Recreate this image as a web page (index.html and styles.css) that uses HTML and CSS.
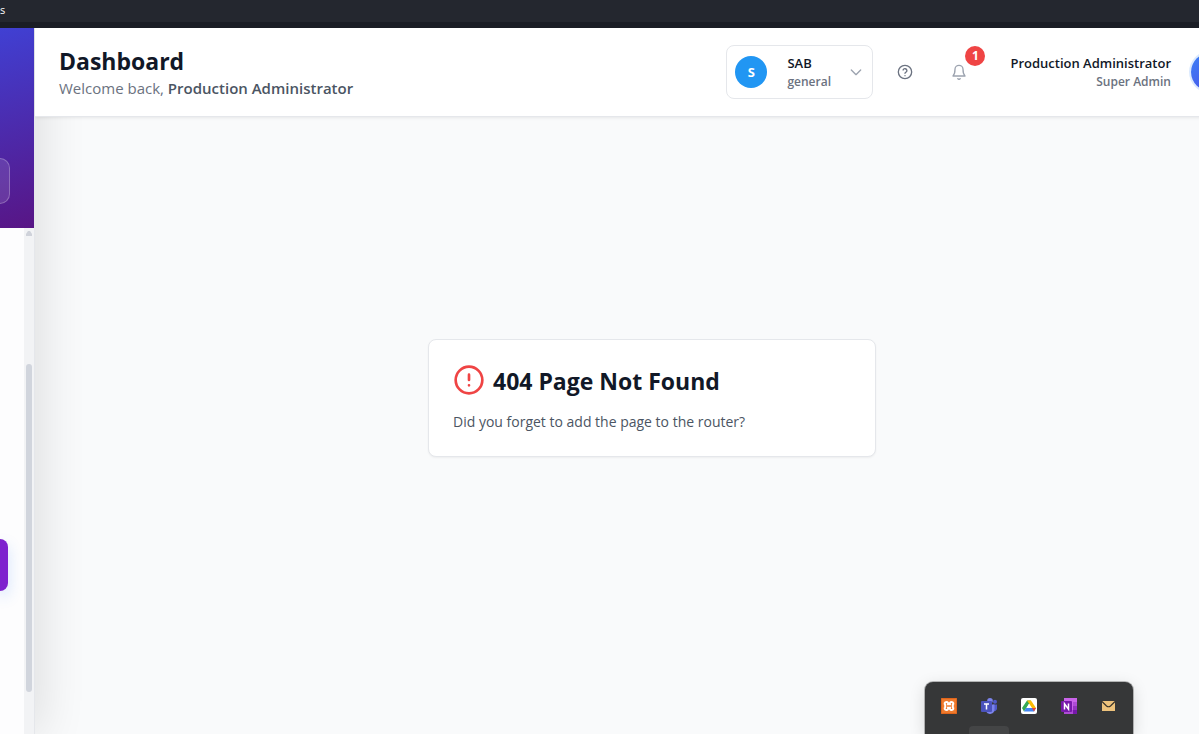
FILE: index.html
```html
<!DOCTYPE html>
<html lang="en">
<head>
<meta charset="utf-8">
<title>Dashboard</title>
<link rel="stylesheet" href="styles.css">
</head>
<body>
<div class="browser-bar"><span>s</span></div>
<div class="app">
  <aside class="sidebar">
    <div class="brand"><div class="brand-card"></div></div>
    <div class="nav-area">
      <nav class="nav"><div class="nav-active"></div></nav>
      <div class="track">
        <svg class="track-arrow" width="6" height="5" viewBox="0 0 6 5"><path d="M2 0h2l2 3v2H0V3z" fill="#cfd2da"/></svg>
        <div class="thumb"></div>
      </div>
    </div>
  </aside>
  <div class="main">
    <header class="header">
      <div class="heading">
        <h1>Dashboard</h1>
        <p>Welcome back, <strong>Production Administrator</strong></p>
      </div>
      <div class="actions">
        <button class="org" type="button">
          <span class="org-logo">S</span>
          <span class="org-text"><span class="name">SAB</span><span class="sub">general</span></span>
          <svg class="chevron" width="16" height="16" viewBox="0 0 24 24" fill="none" stroke="#9ca3af" stroke-width="2" stroke-linecap="round" stroke-linejoin="round"><path d="m5 9 7 7 7-7"/></svg>
        </button>
        <button class="icon-button" type="button" aria-label="Help">
          <svg width="16" height="16" viewBox="0 0 24 24" fill="none" stroke="#6b7280" stroke-width="2" stroke-linecap="round" stroke-linejoin="round"><circle cx="12" cy="12" r="10"/><path d="M9.1 9a3 3 0 0 1 5.8 1c0 2-2.9 2.600-2.900 4M12 17.500h.01"/></svg>
        </button>
        <button class="icon-button bell" type="button" aria-label="Notifications">
          <svg width="16" height="16" viewBox="0 0 24 24" fill="none" stroke="#9ca3af" stroke-width="2" stroke-linecap="round" stroke-linejoin="round"><path d="M6 8a6 6 0 0 1 12 0c0 7 3 10 3 10H3s3-3 3-10"/><path d="M10.300 22a1.940 1.940 0 0 0 3.400 0"/></svg>
          <span class="badge">1</span>
        </button>
        <div class="user">
          <div class="user-text"><span class="name">Production Administrator</span><span class="sub">Super Admin</span></div>
          <div class="avatar"></div>
        </div>
      </div>
    </header>
    <main class="content">
      <section class="card">
        <div class="card-title">
          <svg width="32" height="32" viewBox="0 0 24 24" fill="none" stroke="#ef4444" stroke-width="2" stroke-linecap="round"><circle cx="12" cy="12" r="10"/><path d="M12 8v4M12 16h.01"/></svg>
          <h2>404 Page Not Found</h2>
        </div>
        <p>Did you forget to add the page to the router?</p>
      </section>
    </main>
  </div>
</div>
<div class="tray">
  <svg width="16" height="16" viewBox="0 0 16 16"><rect width="16" height="16" rx="1" fill="#ee7a2d"/><rect x=".5" y=".5" width="15" height="15" rx="1" fill="none" stroke="#e0641a"/><path d="M5.500 4C3.500 4 3.200 5.800 4.200 6.600v2.800C3.200 10.200 3.500 12 5.500 12c1.500 0 1.800-1.200 1.600-2.200h1.800c-.2 1 .1 2.200 1.600 2.200 2 0 2.300-1.800 1.300-2.600V6.600C12.800 5.800 12.500 4 10.500 4 9 4 8.700 5.200 8.900 6.200H7.100C7.300 5.200 7 4 5.500 4z" fill="none" stroke="#fff" stroke-width="2"/></svg>
  <svg width="16" height="16" viewBox="0 0 16 16"><circle cx="9" cy="2.800" r="2.800" fill="#7b83eb"/><circle cx="14" cy="3.800" r="2" fill="#5059c9"/><path d="M12 6.500h4v4.500a3 3 0 0 1-4 2z" fill="#5059c9"/><path d="M5 6.500h8.500v5a4.500 4.500 0 0 1-8.500 2z" fill="#7b83eb"/><rect y="3" width="11" height="11" rx="1" fill="#4b53bc"/><path d="M3 6h5M5.500 6v5.500" stroke="#fff" stroke-width="1.500"/></svg>
  <svg width="16" height="16" viewBox="0 0 16 16"><rect width="16" height="16" rx="2" fill="#fff"/><path d="M6 2.500h4L5 10.500l-2 3-2-3.500z" fill="#34a853"/><path d="M6 2.500h4l5 7.500h-4z" fill="#fbbc04"/><path d="M5 10h10l-2 3.500H3z" fill="#4285f4"/><path d="M11 10h4l-2 3.500z" fill="#ea4335"/><path d="m8 6 2.500 4h-5z" fill="#fff"/></svg>
  <svg width="16" height="16" viewBox="0 0 16 16"><path d="M3 0h13v16H3z" fill="#ca64ea"/><path d="M12 4h4v4h-4z" fill="#ae4bd5"/><path d="M12 8h4v4h-4z" fill="#9332bf"/><path d="M3 12h13v4H3z" fill="#7719aa"/><path d="M3 12h9v4H3z" fill="#ae4bd5"/><rect y="3" width="11" height="11" rx="1" fill="#7719aa"/><path d="M3.500 11.500V5.800l4 5.400V5.500" fill="none" stroke="#fff" stroke-width="1.500"/></svg>
  <svg width="16" height="16" viewBox="0 0 16 16"><path d="M1 3h13v10H1z" fill="#edc27c"/><path d="m1 3.500 4.500 4.500q2 1.500 4 0L14 3.500" fill="none" stroke="#38322a" stroke-width="1.200"/></svg>
  <span class="tray-tab"></span>
</div>
</body>
</html>
```
FILE: styles.css
```css
* { box-sizing: border-box; }
body {
  margin: 0;
  height: 100vh;
  display: flex;
  flex-direction: column;
  overflow: hidden;
  font-family: "Open Sans", "Noto Sans", sans-serif;
  background: #f9fafb;
  color: #111827;
}
h1, h2, p { margin: 0; }
button { font: inherit; color: inherit; background: none; border: 0; padding: 0; }
svg { display: block; flex: none; }

.browser-bar {
  flex: none;
  height: 28px;
  background: #24272f;
  border-bottom: 6px solid #1a1d25;
  color: #fff;
  font-size: 11px;
  line-height: 20px;
}
.app { flex: 1; display: flex; min-height: 0; overflow: hidden; }

.sidebar {
  flex: none;
  width: 35px;
  display: flex;
  flex-direction: column;
  border-right: 1px solid #e5e7eb;
  background: #fdfdfe;
  box-shadow: 0 0 50px rgba(0, 0, 0, .16);
}
.brand {
  height: 200px;
  padding-top: 130px;
  background: linear-gradient(165deg, #4040d3, #581585);
}
.brand-card {
  width: 10px;
  height: 46px;
  border: 1px solid rgba(255, 255, 255, .25);
  border-left: 0;
  border-radius: 0 12px 12px 0;
  background: rgba(255, 255, 255, .12);
}
.nav-area { flex: 1; display: flex; }
.nav { flex: 1; padding-top: 311px; }
.nav-active {
  width: 8px;
  height: 52px;
  border-radius: 0 10px 10px 0;
  background: #7e22ce;
  box-shadow: 0 6px 14px rgba(59, 130, 246, .25);
}
.track {
  width: 10px;
  background: #f2f3f5;
  display: flex;
  flex-direction: column;
  align-items: center;
  padding-top: 3px;
}
.thumb {
  width: 6px;
  height: 328px;
  margin-top: 128px;
  border-radius: 3px;
  background: #d1d5dd;
}

/* The main column runs past the right edge of the window. */
.main {
  flex: none;
  width: calc(100% + 35px);
  display: flex;
  flex-direction: column;
}
.header {
  position: relative;
  display: flex;
  justify-content: space-between;
  align-items: center;
  height: 89px;
  padding: 0 40px 0 24px;
  background: #fff;
  border-bottom: 1px solid #e5e7eb;
  box-shadow: 0 1px 3px rgba(0, 0, 0, .08);
}
.heading h1 { font-size: 23px; line-height: 32px; font-weight: 700; }
.heading p { font-size: 15px; line-height: 22px; color: #6b7280; }
.heading strong { font-weight: 600; color: #4b5563; }
.actions { display: flex; align-items: center; }
.org {
  display: flex;
  align-items: center;
  width: 147px;
  height: 54px;
  padding: 0 8px;
  border: 1px solid #e5e7eb;
  border-radius: 8px;
  text-align: left;
}
.org-logo {
  width: 32px;
  height: 32px;
  border-radius: 50%;
  background: #2196f3;
  color: #fff;
  font-size: 13px;
  line-height: 32px;
  font-weight: 700;
  text-align: center;
}
.org-text { margin-left: 20px; flex: 1; }
.org-text, .user-text { padding-top: 2px; }
.name, .sub { display: block; font-weight: 600; }
.name { font-size: 13px; line-height: 18px; }
.sub { font-size: 12px; line-height: 20px; color: #6b7280; }
.icon-button {
  position: relative;
  display: grid;
  place-items: center;
  width: 32px;
  height: 32px;
  margin-left: 16px;
}
.bell { margin-left: 22px; }
.badge {
  position: absolute;
  top: -10px;
  right: -10px;
  width: 20px;
  height: 20px;
  border-radius: 50%;
  background: #ef4444;
  color: #fff;
  font-size: 12px;
  line-height: 20px;
  font-weight: 700;
  text-align: center;
}
.user { display: flex; align-items: center; gap: 20px; margin-left: 35px; }
.user-text { text-align: right; }
.avatar {
  width: 38px;
  height: 38px;
  border-radius: 50%;
  background: linear-gradient(135deg, #3b82f6, #4f46e5);
  box-shadow: 0 0 0 2px #dbeafe;
}
.content {
  flex: 1;
  display: grid;
  place-items: center;
  padding-bottom: 55px;
}
.card {
  width: 448px;
  padding: 24px;
  border: 1px solid #e5e7eb;
  border-radius: 8px;
  background: #fff;
  box-shadow: 0 1px 2px rgba(0, 0, 0, .05);
}
.card-title { display: flex; gap: 8px; margin-bottom: 16px; }
.card h2 { font-size: 23px; line-height: 34px; font-weight: 700; height: 32px; }
.card p { font-size: 14px; line-height: 20px; color: #4b5563; }

/* System tray flyout over the page */
.tray {
  position: absolute;
  right: 66px;
  bottom: 0;
  width: 208px;
  height: 52px;
  padding: 16px;
  display: flex;
  justify-content: space-between;
  border-radius: 8px 8px 0 0;
  background: #363738;
  box-shadow: 0 0 0 1px rgba(0, 0, 0, .25), 0 4px 16px rgba(0, 0, 0, .15);
}
.tray-tab {
  position: absolute;
  left: 44px;
  bottom: 0;
  width: 40px;
  height: 8px;
  border-radius: 4px 4px 0 0;
  background: #444546;
}
```
